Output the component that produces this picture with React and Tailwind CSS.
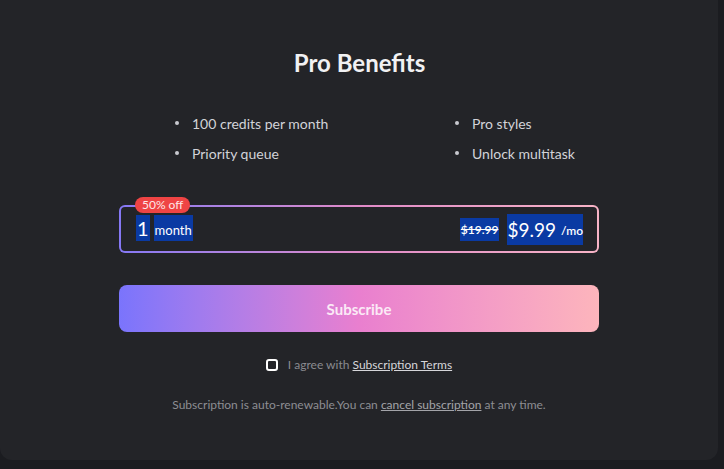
import React, { useState } from "react";

const benefits = [
  ["100 credits per month", "Pro styles"],
  ["Priority queue", "Unlock multitask"],
];

const Bullet = ({ text }) => (
  <li className="flex items-center h-5">
    <span className="w-[4px] h-[4px] rounded-full bg-[#c9cad0] ml-[96px] mr-[13px]" />
    <span>{text}</span>
  </li>
);

export default function App() {
  const [agreed, setAgreed] = useState(false);

  return (
    <div className="h-[469px] w-[724px] bg-[#1b1c20] overflow-hidden" style={{ fontFamily: "Lato, 'Liberation Sans', sans-serif" }}>
      <div className="w-[718px] h-[460px] bg-[#232428] rounded-b-xl flex flex-col items-center pt-[48px]">
        <h2 className="text-[24px] leading-[30px] font-bold text-[#f1f1f3] ml-[1px]">Pro Benefits</h2>

        {/* benefits list */}
        <div className="grid grid-cols-2 w-[560px] mt-[35px] text-[14px] text-[#d2d3d8]">
          <ul className="flex flex-col gap-[10px]">
            {benefits.map(row => <Bullet key={row[0]} text={row[0]} />)}
          </ul>
          <ul className="flex flex-col gap-[10px]">
            {benefits.map(row => <Bullet key={row[1]} text={row[1]} />)}
          </ul>
        </div>

        {/* plan box */}
        <div className="relative mt-[42px] w-[480px] h-[48px] p-[2px] rounded-md bg-gradient-to-r from-[#8578f5] via-[#e08ac8] to-[#f7b3c6]">
          <span className="absolute left-[16px] top-[-8px] h-[16px] px-[7px] rounded-full bg-[#ef4444] text-[12px] leading-[16px] text-[#fde8e8]">50% off</span>
          <div className="w-full h-full rounded-[4px] bg-[#232428] flex items-center justify-between pl-[15px] pr-[14px]">
            <div className="flex items-center gap-[4px] text-white mb-[3px]">
              <span className="bg-[#0a3aa3] text-[20px] leading-[26px] h-[26px] px-[1px]">1</span>
              <span className="bg-[#0a3aa3] text-[13px] leading-[26px] h-[26px] px-[1px] pt-[2px]">month</span>
            </div>
            <div className="flex items-center gap-[8px] text-white">
              <span className="bg-[#0a3aa3] text-[12px] font-semibold leading-[23px] h-[23px] line-through px-[1px] mt-[1px]">$19.99</span>
              <span className="bg-[#0a3aa3] h-[31px] flex items-center">
                <span className="text-[19px] leading-[31px]">$9.99</span>
                <span className="text-[12px] font-semibold ml-[5px] mt-[4px]">/mo</span>
              </span>
            </div>
          </div>
        </div>

        <button className="mt-[32px] w-[480px] h-[47px] pt-[2px] rounded-lg bg-gradient-to-r from-[#7a74fc] via-[#e97fcf] to-[#fdb5bc] text-[15px] font-bold text-[#fbe9f6]">
          Subscribe
        </button>

        <label className="mt-[25px] flex items-center h-4 text-[12px] text-[#8a8b90] cursor-pointer">
          <input type="checkbox" checked={agreed} onChange={() => setAgreed(!agreed)} className="appearance-none w-[12px] h-[12px] border-2 border-white rounded-[3px] mr-[10px]" />
          <span>I agree with&nbsp;</span>
          <a className="underline text-[#d6d6da]">Subscription Terms</a>
        </label>

        <p className="mt-[24px] h-4 text-[12px] leading-4 text-[#8d8e93]">
          Subscription is auto-renewable.You can <a className="underline text-[#a3a4a9]">cancel subscription</a> at any time.
        </p>
      </div>
    </div>
  );
}
